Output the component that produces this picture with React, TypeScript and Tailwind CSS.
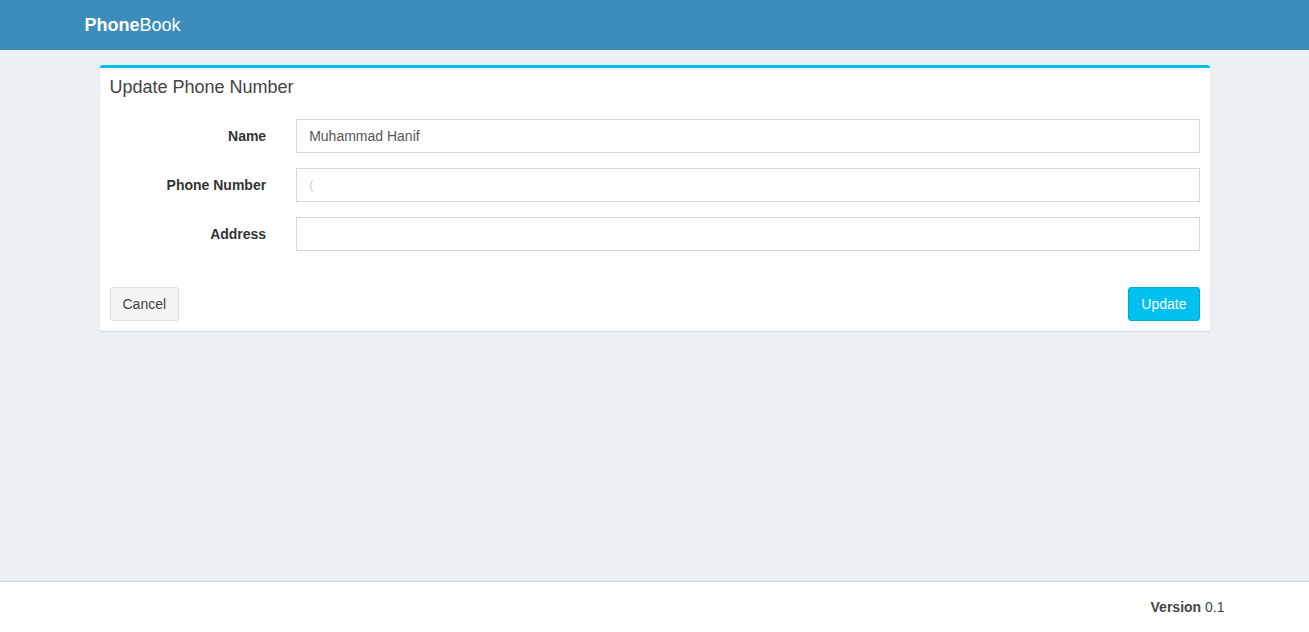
import React from "react";

export default function App() {
  const font = { fontFamily: '"Liberation Sans", Arial, Helvetica, sans-serif' };
  return (
    <div className="min-h-[632px] h-[632px] flex flex-col bg-[#ecf0f5] text-[14px] text-[#333]" style={font}>
      <header className="h-[50px] bg-[#3c8dbc] shrink-0">
        <div className="w-[1170px] mx-auto px-[15px] h-full flex items-center">
          <span className="text-[18px] text-white leading-none">
            <b>Phone</b>Book
          </span>
        </div>
      </header>
      <main className="flex-1">
        <div className="w-[1170px] mx-auto px-[30px] py-[15px]">
          <div className="bg-white border-t-[3px] border-[#00c0ef] rounded-[3px] shadow-[0_1px_1px_rgba(0,0,0,0.1)]">
            <div className="p-[10px]">
              <h3 className="text-[18px] leading-none text-[#444] m-0">Update Phone Number</h3>
            </div>
            <div className="px-[10px] pt-[13px] pb-[10px]">
              {[
                { label: "Name", value: "Muhammad Hanif" },
                { label: "Phone Number", value: "", ph: "(" },
                { label: "Address", value: "" },
              ].map((f) => (
                <div key={f.label} className="flex mx-[-15px] mb-[15px]">
                  <label className="w-[186.67px] px-[15px] pt-[7px] text-right font-bold text-[14px] leading-[20px] text-[#333] shrink-0">
                    {f.label}
                  </label>
                  <div className="flex-1 px-[15px]">
                    <div className="h-[34px] border border-[#d2d6de] px-[12px] flex items-center text-[14px] text-[#555]">
                      {f.value ? f.value : f.ph ? <span className="text-[#ccc] text-[12px]">{f.ph}</span> : null}
                    </div>
                  </div>
                </div>
              ))}
            </div>
            <div className="pt-[11px] px-[10px] pb-[10px] flex justify-between">
              <button className="h-[34px] px-[12px] bg-[#f4f4f4] border border-[#ddd] rounded-[3px] text-[14px] text-[#444]">
                Cancel
              </button>
              <button className="h-[34px] px-[12px] bg-[#00c0ef] border border-[#00acd6] rounded-[3px] text-[14px] text-white">
                Update
              </button>
            </div>
          </div>
        </div>
      </main>
      <footer className="h-[51px] bg-white border-t border-[#d2d6de] shrink-0">
        <div className="w-[1170px] mx-auto px-[15px] h-full flex items-center justify-end">
          <span className="text-[14px] text-[#444]">
            <b>Version</b> 0.1
          </span>
        </div>
      </footer>
    </div>
  );
}
